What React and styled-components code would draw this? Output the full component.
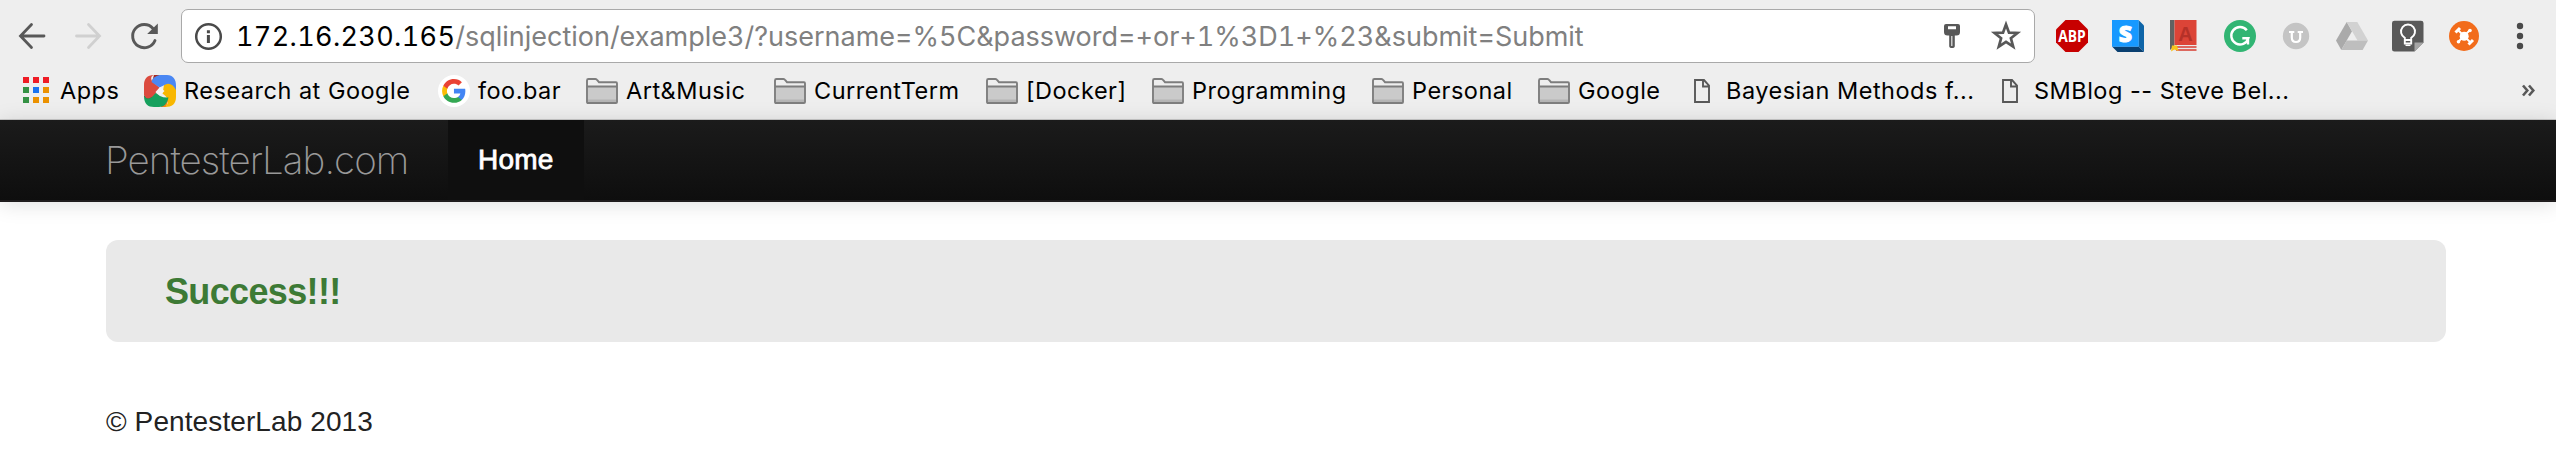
import React from 'react';
import styled, { createGlobalStyle } from 'styled-components';

const GlobalStyle = createGlobalStyle`
  * { box-sizing: border-box; }
  body { margin: 0; background: #fff; }
`;

const Page = styled.div`
  min-height: 456px;
  background: #fff;
  font-family: 'Liberation Sans', Arial, sans-serif;
  color: #222;
`;

const BrowserChrome = styled.header`
  height: 120px;
  padding-top: 9px;
  background: #eee;
  border-bottom: 1px solid #c8c8c8;
  font-family: Inter, 'Noto Sans', sans-serif;
`;

const Toolbar = styled.div`
  display: flex;
  align-items: center;
  height: 54px;
  padding: 0 20px 0 16px;
`;

const NavButtons = styled.div`
  display: flex;
  gap: 24px;
  width: 165px;
`;

const Icon = styled.svg`
  display: block;
  flex: none;
  width: ${(p) => p.$w || 32}px;
  height: ${(p) => p.$h || 32}px;
  overflow: visible;
`;

const AddressBar = styled.div`
  flex: 1;
  display: flex;
  align-items: center;
  height: 54px;
  padding: 0 13px 0 12px;
  background: #fff;
  border: 1px solid #a9a9a9;
  border-radius: 7px;
`;

const Url = styled.div`
  flex: 1;
  margin-left: 14px;
  padding-top: 1px;
  font-size: 27px;
  line-height: 34px;
  white-space: nowrap;
  font-feature-settings: 'tnum';
  letter-spacing: -0.01px;
  color: #808080;
`;

const Host = styled.span`
  letter-spacing: 0.35px;
  color: #000;
`;

const AddressActions = styled.div`
  display: flex;
  align-items: center;
  gap: 31px;
`;

const Extensions = styled.div`
  display: flex;
  gap: 24px;
  margin-left: 21px;
`;

const BookmarksBar = styled.nav`
  display: flex;
  align-items: center;
  height: 56px;
  padding: 0 20px 0 20px;
`;

const Bookmark = styled.a`
  display: flex;
  align-items: center;
  flex: none;
  gap: ${(p) => p.$gap || 8}px;
  width: ${(p) => p.$width}px;
  font-size: 23.5px;
  line-height: 30px;
  letter-spacing: 0.5px;
  white-space: nowrap;
  color: #000;
`;

const Overflow = styled.div`
  margin-left: auto;
`;

const Navbar = styled.div`
  display: flex;
  height: 82px;
  padding-left: 105px;
  background: linear-gradient(#1b1b1b, #0e0e0e);
  border-bottom: 2px solid #1f1c1d;
  box-shadow: 0 2px 20px rgba(0, 0, 0, 0.13);
`;

const Brand = styled.a`
  width: 343px;
  padding-top: 16px;
  font-family: Inter, sans-serif;
  font-size: 38.5px;
  font-weight: 150;
  line-height: 48px;
  letter-spacing: -0.95px;
  color: #999;
`;

const NavItem = styled.a`
  width: 136px;
  padding: 20px 0 0 30px;
  font-size: 28px;
  line-height: 40px;
  letter-spacing: 0.2px;
  -webkit-text-stroke: 0.8px #fff;
  background: #0f0f0f;
  color: #fff;
`;

const Content = styled.main`
  padding: 38px 110px 0 106px;
`;

const Banner = styled.section`
  display: flex;
  align-items: center;
  height: 102px;
  padding: 1px 0 0 59px;
  border-radius: 12px;
  background: #e9e9e9;
`;

const BannerText = styled.h1`
  margin: 0;
  font-size: 36px;
  line-height: 40px;
  letter-spacing: -0.65px;
  color: #3d7a35;
`;

const Footer = styled.footer`
  margin-top: 60px;
  font-size: 28px;
  line-height: 40px;
  letter-spacing: 0.1px;
`;

const Back = () => (
  <Icon viewBox="0 0 32 32" fill="none" stroke="#585858" strokeWidth="2.8" strokeLinecap="round">
    <path d="M28 16H5M15.5 4.5 4.5 16l11 11.5" />
  </Icon>
);

const Forward = () => (
  <Icon viewBox="0 0 32 32" fill="none" stroke="#d0d0d0" strokeWidth="2.8" strokeLinecap="round">
    <path d="M4.500 16H27.500M16.500 4.500 27.500 16l-11 11.500" />
  </Icon>
);

const Reload = () => (
  <Icon viewBox="0 0 32 32">
    <path d="M25 8.500A11.600 11.600 0 1 0 27 20.500" fill="none" stroke="#585858" strokeWidth="2.900" strokeLinecap="round" />
    <path d="M29.800 3.500V14H19.200Z" fill="#585858" />
  </Icon>
);

const Info = () => (
  <Icon $w={28} $h={28} viewBox="0 0 28 28">
    <circle cx="14.500" cy="14.500" r="12.300" fill="none" stroke="#4a4a4a" strokeWidth="2.500" />
    <path d="M12.900 8.300h3v3h-3zM12.900 13h3v8h-3z" fill="#4a4a4a" />
  </Icon>
);

const Key = () => (
  <Icon $w={16} $h={28} viewBox="0 0 16 28">
    <path
      fillRule="evenodd"
      fill="#585858"
      d="M2 2H14Q16 2 16 4V10Q16 13.500 12.500 13.500H10.800V24Q10.800 26 8 26T5.200 24V13.500H3.500Q0 13.500 0 10V4Q0 2 2 2ZM4 4.300V7.300H12V4.300Z"
    />
    <path d="M7.800 14V24" stroke="#ddd" strokeWidth="1.300" />
  </Icon>
);

const Star = () => (
  <Icon $w={30} $h={30} viewBox="0 0 30 30">
    <path
      d="M15 3.500 18 11.600 26.500 12 19.900 17.300 22.200 25.600 15 20.900 7.800 25.600 10.100 17.300 3.500 12 12 11.600Z"
      fill="none"
      stroke="#585858"
      strokeWidth="2.700"
    />
  </Icon>
);

const AdBlock = () => (
  <Icon viewBox="0 0 32 32">
    <path d="M9.500 0h13L32 9.500v13L22.500 32h-13L0 22.500v-13z" fill="#c70000" />
    <text x="2.300" y="21.900" fontFamily="Open Sans, sans-serif" fontWeight="700" fontSize="16.500" fill="#fff" textLength="27.500" lengthAdjust="spacingAndGlyphs">ABP</text>
  </Icon>
);

const BlueBlock = () => (
  <Icon viewBox="0 0 32 32">
    <path d="M26.500 0 32 5.500V32L26.500 26.500Z" fill="#0e65a8" />
    <path d="M0 26.500H26.500L32 32H5.500Z" fill="#093f70" />
    <path d="M0 0H26.700V26.700H0Z" fill="#1799ff" />
    <text x="13.500" y="21.500" textAnchor="middle" fontFamily="Open Sans, sans-serif" fontWeight="800" fontSize="23" fill="#fff" stroke="#fff" strokeWidth="1">S</text>
  </Icon>
);

const Dictionary = () => (
  <Icon viewBox="0 0 32 32">
    <path d="M2 0H6.500V26L2 30Z" fill="#626262" />
    <path d="M6.500 25H28.500V31H6Z" fill="#e8e8e8" />
    <path d="M6.500 0H28.500V25H6.500Z" fill="#dc4437" />
    <path d="M8 27H28.500M8 30H28.500" stroke="#d93e32" strokeWidth="1.300" />
    <path d="M4 25.500H9L10.500 31 6.500 29.500 3 31.500Z" fill="#f8c51c" />
    <text x="17.500" y="20.500" textAnchor="middle" fontFamily="Liberation Sans, sans-serif" fontWeight="700" fontSize="20" fill="#b53128">A</text>
  </Icon>
);

const Grammar = () => (
  <Icon viewBox="0 0 32 32">
    <circle cx="16" cy="16" r="16" fill="#31b573" />
    <path d="M22.800 10.300A8.700 8.700 0 1 0 24.300 18.300H18.300M24 18V24.500" fill="none" stroke="#fff" strokeWidth="2.400" />
  </Icon>
);

const GreyShield = () => (
  <Icon viewBox="0 0 32 32">
    <circle cx="16" cy="16" r="13.200" fill="#c4c4c4" />
    <path d="M9 12H14.300M17.700 12H23M11.800 12V17.500Q11.800 22 16 22T20.200 17.500V12" fill="none" stroke="#fff" strokeWidth="2.200" />
  </Icon>
);

const Drive = () => (
  <Icon viewBox="0 0 32 32">
    <path d="M10.700 2 16 11.200 5.300 30 0 20.600Z" fill="#aaa" />
    <path d="M10.700 2H21.300L32 20.600H21.500Z" fill="#d2d2d2" />
    <path d="M10.700 20.600H32L26.600 30H5.300Z" fill="#bebebe" />
  </Icon>
);

const Keep = () => (
  <Icon viewBox="0 0 32 32">
    <path d="M2.500 .7H29Q31.500 .7 31.500 3V22.500L22.500 31.500H2.500Q0 31.500 0 29V3Q0 .7 2.500 .7Z" fill="#595959" />
    <path d="M31.500 22.500H22.500V31.500Z" fill="#a5a5a5" />
    <path d="M12.800 20V17.800A7 7 0 1 1 19.200 17.800V20ZM12.800 21V23.500H19.200V21" fill="none" stroke="#fff" strokeWidth="1.900" />
    <path d="M13.500 25.300H18.500" stroke="#fff" strokeWidth="1.500" />
  </Icon>
);

const Crossbones = () => (
  <Icon viewBox="0 0 32 32">
    <circle cx="16" cy="16" r="15" fill="#f26c1b" />
    <path d="M9.500 9.500 22.500 22.500M22 10 10 22" stroke="#fff" strokeWidth="1.800" />
    <path d="M7.500 12.500 12 8M20.500 24.500 25 20" stroke="#fff" strokeWidth="3" />
    <circle cx="16.200" cy="16.300" r="4.500" fill="#fff" />
    <circle cx="22" cy="10.500" r="1.800" fill="#fff" />
    <circle cx="10.500" cy="21.800" r="1.800" fill="#fff" />
  </Icon>
);

const Menu = () => (
  <Icon viewBox="0 0 32 32" fill="#4a4a4a">
    <circle cx="16" cy="6" r="3.200" />
    <circle cx="16" cy="16" r="3.200" />
    <circle cx="16" cy="26" r="3.200" />
  </Icon>
);

const AppsIcon = () => (
  <Icon viewBox="0 0 32 32">
    <path d="M3 2h6v6H3zM13 2h6v6h-6zM23 2h6v6h-6z" fill="#ee1c25" />
    <path d="M3 12h6v6H3zM3 22h6v6H3z" fill="#349144" />
    <path d="M13 12h6v6h-6z" fill="#1a73f0" />
    <path d="M23 12h6v6h-6zM13 22h6v6h-6zM23 22h6v6h-6z" fill="#eb9100" />
  </Icon>
);

const ResearchIcon = () => (
  <Icon viewBox="0 0 32 32">
    <path d="M25 23 22 32H17L16 27Z" fill="#f57f17" />
    <path d="M20 10C25 5 31 8 32 13V22C32 29 28 32 21 32C25 28 25 25 21.500 21L18.500 18.500Z" fill="#f8b700" />
    <path d="M0 21C0 29 4 32 10 32H15C20 32 23 29 24.500 22.500Q20 23 16 21L12 18Z" fill="#16a05d" />
    <path d="M0 21Q3 26 8 22L4 18Z" fill="#0b8043" />
    <path d="M10 0H16L12 5 8 7Z" fill="#a52a20" />
    <path d="M10 0C3 0 0 4 0 10V20C2 25 6 24 9 21L16 13 9 7C6 4 7 1 10 0Z" fill="#db4a3e" />
    <path d="M7.500 7C9 1.500 14 0 18 0H23C29 0 32 4 32 11V15C29 9 25 7.500 21.500 9.500L15.500 12.500Z" fill="#4a87f3" />
    <path d="M16 12 20.500 16 16 20.500 11.500 17Z" fill="#f4f4f4" />
  </Icon>
);

const GoogleIcon = () => (
  <Icon viewBox="0 0 32 32">
    <circle cx="16" cy="16" r="16" fill="#fff" />
    <g transform="translate(3 3) scale(1.08)">
      <path fill="#4285F4" d="M22.560 12.250c0-.78-.07-1.530-.2-2.250H12v4.260h5.920c-.26 1.370-1.040 2.530-2.210 3.310v2.770h3.570c2.080-1.920 3.280-4.740 3.280-8.090z" />
      <path fill="#34A853" d="M12 23c2.970 0 5.460-.98 7.280-2.660l-3.570-2.770c-.98.66-2.230 1.060-3.710 1.060-2.860 0-5.290-1.930-6.160-4.530H2.180v2.840C3.990 20.530 7.700 23 12 23z" />
      <path fill="#FBBC05" d="M5.840 14.090c-.22-.66-.35-1.360-.35-2.090s.13-1.430.35-2.090V7.070H2.180C1.430 8.550 1 10.220 1 12s.43 3.450 1.180 4.930l2.850-2.220.81-.62z" />
      <path fill="#EA4335" d="M12 5.380c1.620 0 3.060.56 4.210 1.640l3.150-3.150C17.450 2.090 14.970 1 12 1 7.700 1 3.990 3.470 2.180 7.070l3.660 2.840c.87-2.600 3.300-4.530 6.160-4.530z" />
    </g>
  </Icon>
);

const FolderIcon = () => (
  <Icon viewBox="0 0 32 32">
    <path d="M1 27V5.500Q1 4 2.500 4H9.500Q10.500 4 11.500 5.500L13 7.200H30Q31 7.200 31 8.500V27Q31 28 30 28H2Q1 28 1 27Z" fill="#eee" />
    <path d="M2 12H30V27H2Z" fill="#cacaca" />
    <path d="M2 24.500H30V27H2Z" fill="#b4b4b4" />
    <path d="M1 27V5.500Q1 4 2.500 4H9.500Q10.500 4 11.500 5.500L13 7.200H30Q31 7.200 31 8.500V27Q31 28 30 28H2Q1 28 1 27ZM1 11.500H31" fill="none" stroke="#7d7d7d" strokeWidth="1.900" />
  </Icon>
);

const PageIcon = () => (
  <Icon $w={16} viewBox="0 0 16 32">
    <path d="M1 5H10L15 10.500V27H1ZM9 5V11.500H15" fill="none" stroke="#585858" strokeWidth="1.900" />
  </Icon>
);

const bookmarks = [
  { label: 'Apps', icon: AppsIcon, width: 124 },
  { label: 'Research at Google', icon: ResearchIcon, width: 294 },
  { label: 'foo.bar', icon: GoogleIcon, width: 148 },
  { label: 'Art&Music', icon: FolderIcon, width: 188 },
  { label: 'CurrentTerm', icon: FolderIcon, width: 212 },
  { label: '[Docker]', icon: FolderIcon, width: 166 },
  { label: 'Programming', icon: FolderIcon, width: 220 },
  { label: 'Personal', icon: FolderIcon, width: 166 },
  { label: 'Google', icon: FolderIcon, width: 156 },
  { label: 'Bayesian Methods f...', icon: PageIcon, width: 308, gap: 16 },
  { label: 'SMBlog -- Steve Bel...', icon: PageIcon, width: 308, gap: 16 },
];

export default function App() {
  return (
    <Page>
      <GlobalStyle />
      <BrowserChrome>
        <Toolbar>
          <NavButtons>
            <Back />
            <Forward />
            <Reload />
          </NavButtons>
          <AddressBar>
            <Info />
            <Url>
              <Host>172.16.230.165</Host>
              /sqlinjection/example3/?username=%5C&amp;password=+or+1%3D1+%23&amp;submit=Submit
            </Url>
            <AddressActions>
              <Key />
              <Star />
            </AddressActions>
          </AddressBar>
          <Extensions>
            <AdBlock />
            <BlueBlock />
            <Dictionary />
            <Grammar />
            <GreyShield />
            <Drive />
            <Keep />
            <Crossbones />
            <Menu />
          </Extensions>
        </Toolbar>
        <BookmarksBar>
          {bookmarks.map(({ label, icon: Glyph, width, gap }) => (
            <Bookmark key={label} $width={width} $gap={gap}>
              <Glyph />
              {label}
            </Bookmark>
          ))}
          <Overflow>
            <Icon $w={16} $h={16} viewBox="0 0 16 16" fill="none" stroke="#585858" strokeWidth="2.600">
              <path d="M3 2.500 7.300 7.500 3 12.500M9 2.500 13.300 7.500 9 12.500" />
            </Icon>
          </Overflow>
        </BookmarksBar>
      </BrowserChrome>
      <Navbar>
        <Brand>PentesterLab.com</Brand>
        <NavItem>Home</NavItem>
      </Navbar>
      <Content>
        <Banner>
          <BannerText>Success!!!</BannerText>
        </Banner>
        <Footer>© PentesterLab 2013</Footer>
      </Content>
    </Page>
  );
}
